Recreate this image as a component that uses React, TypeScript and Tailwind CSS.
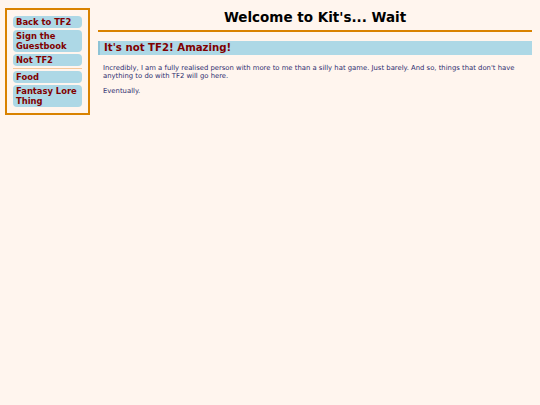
import React from "react";

const links = [
  { label: "Back to TF2" },
  { label: "Sign the Guestbook" },
  { label: "Not TF2" },
];

const extra = [{ label: "Food" }, { label: "Fantasy Lore Thing" }];

function NavButton({ label }: { label: string }) {
  return (
    <a className="block rounded-[4px] bg-[#add8e6] px-[3px] py-[1px] text-[8.4px] font-bold leading-[10px] text-[#800000]">
      {label}
    </a>
  );
}

export default function App() {
  return (
    <main
      className="flex min-h-screen items-start gap-2 bg-[#fff5ee] pl-[5px] pr-2 pt-2"
      style={{ fontFamily: '"DejaVu Sans", Verdana, sans-serif' }}
    >
      <nav className="flex w-[85px] shrink-0 flex-col gap-[2px] border-2 border-[#d98200] p-[6px]">
        {links.map((l) => (
          <NavButton key={l.label} label={l.label} />
        ))}
        <div className="h-px bg-[#f5c89a]" />
        {extra.map((l) => (
          <NavButton key={l.label} label={l.label} />
        ))}
      </nav>
      <section className="flex-1">
        <h1 className="border-b-2 border-[#d98200] pb-[5px] pt-[1px] text-center text-[13.5px] font-bold leading-[16px] text-black">
          Welcome to Kit's... Wait
        </h1>
        <h2 className="mt-[9px] border-l-2 border-[#8ec3d6] bg-[#add8e6] px-[4px] py-[1px] text-[10.2px] font-bold leading-[12px] text-[#800000]">
          It's not TF2! Amazing!
        </h2>
        <div className="px-[5px] pt-[9px] text-[6.85px] leading-[8px] text-[#2e2e6e]">
          <p>
            Incredibly, I am a fully realised person with more to me than a silly hat game. Just barely. And so, things
            that don't have anything to do with TF2 will go here.
          </p>
          <p className="mt-[7px]">Eventually.</p>
        </div>
      </section>
    </main>
  );
}
